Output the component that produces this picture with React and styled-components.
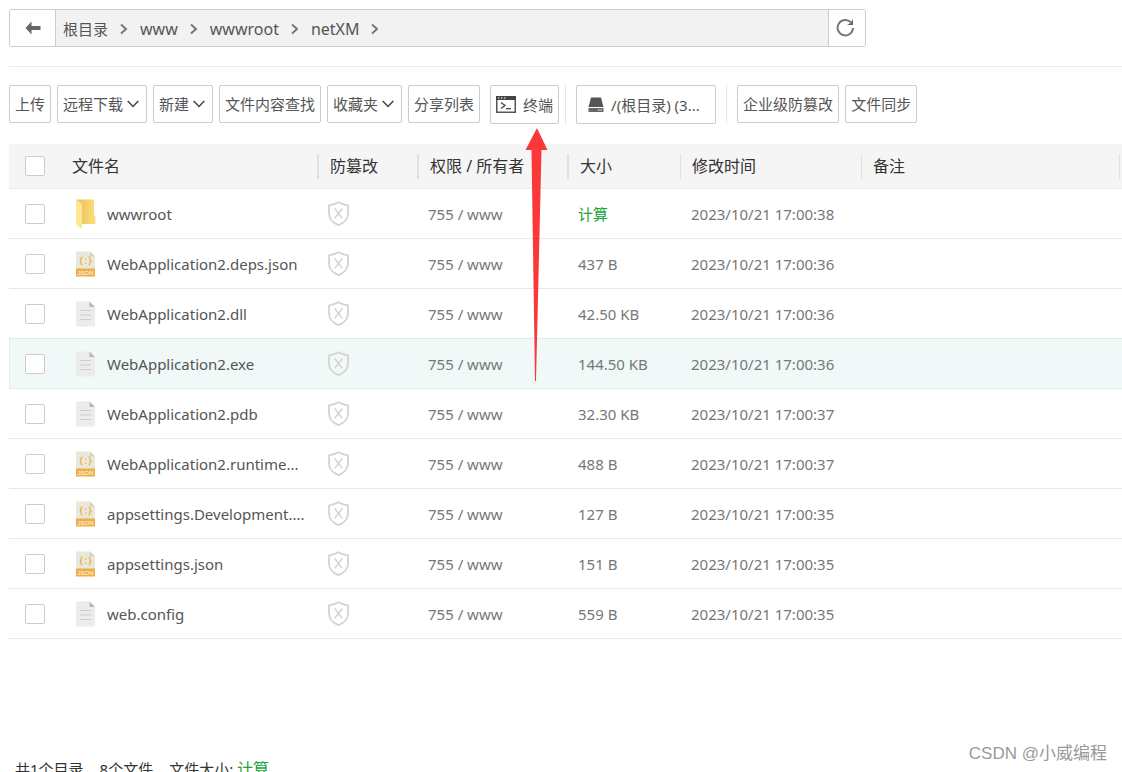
import React from "react";
import styled, { createGlobalStyle, css } from "styled-components";

const crumbs = ["www", "wwwroot", "netXM"];

const files = [
  { name: "wwwroot", type: "folder", size: null, time: "2023/10/21 17:00:38" },
  { name: "WebApplication2.deps.json", type: "json", size: "437 B", time: "2023/10/21 17:00:36" },
  { name: "WebApplication2.dll", type: "file", size: "42.50 KB", time: "2023/10/21 17:00:36" },
  { name: "WebApplication2.exe", type: "file", size: "144.50 KB", time: "2023/10/21 17:00:36", active: true },
  { name: "WebApplication2.pdb", type: "file", size: "32.30 KB", time: "2023/10/21 17:00:37" },
  { name: "WebApplication2.runtime...", type: "json", size: "488 B", time: "2023/10/21 17:00:37" },
  { name: "appsettings.Development....", type: "json", size: "127 B", time: "2023/10/21 17:00:35" },
  { name: "appsettings.json", type: "json", size: "151 B", time: "2023/10/21 17:00:35" },
  { name: "web.config", type: "file", size: "559 B", time: "2023/10/21 17:00:35" },
];

const BackIcon = () => (
  <svg width="16" height="14" viewBox="0 0 16 14">
    <path d="M6.500 0.500v4.500h9v4h-9v4.500L0.500 7z" fill="#666" />
  </svg>
);

const RefreshIcon = () => (
  <svg width="20" height="20" viewBox="0 0 20 20" fill="none">
    <path d="M14.800 4.300A7.700 7.700 0 1 0 17 10" stroke="#777" strokeWidth="2" />
    <path d="M17 1v6h-6l3.500-2z" fill="#666" />
  </svg>
);

const CrumbArrow = () => (
  <svg width="8" height="12" viewBox="0 0 8 12" fill="none">
    <path d="M1 1.500L6 6L1 10.500" stroke="#777" strokeWidth="2" />
  </svg>
);

const DownIcon = () => (
  <svg width="14" height="8" viewBox="0 0 14 8" fill="none">
    <path d="M0.700 1L6 6.500L11.300 1" stroke="#444" strokeWidth="1.500" />
  </svg>
);

const TerminalIcon = () => (
  <svg width="20" height="17" viewBox="0 0 20 17" fill="none">
    <rect x="0.750" y="0.750" width="18.500" height="15.500" stroke="#555" strokeWidth="1.500" />
    <rect x="0" y="0" width="20" height="4" fill="#444" />
    <path d="M2 2h1.500M5 2h1.500M8 2h1.500" stroke="#fff" strokeWidth="1" />
    <path d="M5 6.500L9 9.500L5 12.500" stroke="#444" strokeWidth="1.300" />
    <path d="M10 12.700h5" stroke="#444" strokeWidth="1.300" />
  </svg>
);

const DriveIcon = () => (
  <svg width="16" height="16" viewBox="0 0 16 16">
    <path d="M3 0.500h10l2.500 9.500h-15z" fill="#555" />
    <path d="M0.500 11h15v4h-15z" fill="#666" />
    <path d="M10 13h1.500M12.500 13h1.500" stroke="#fff" strokeWidth="1" />
  </svg>
);

const ShieldIcon = () => (
  <svg width="21" height="26" viewBox="0 0 21 26" fill="none">
    <path
      d="M10.500 1.200C7.700 2.900 4.600 3.800 1 4.400V12.500c0 5.500 4.500 9.800 9.500 11.700c5-1.900 9.500-6.200 9.500-11.700V4.400C16.400 3.800 13.300 2.900 10.500 1.200z"
      stroke="#d3d3d3"
      strokeWidth="1.800"
      strokeLinejoin="round"
    />
    <path d="M6.700 7.500l7.600 9.800M14.300 7.500l-7.600 9.800" stroke="#d0d0d0" strokeWidth="1.300" />
  </svg>
);

const FolderIcon = () => (
  <svg width="20" height="30" viewBox="0 0 20 30">
    <defs>
      <linearGradient id="folder" x1="0" x2="1">
        <stop offset="0.300" stopColor="#eec75f" />
        <stop offset="1" stopColor="#ffe07c" />
      </linearGradient>
    </defs>
    <path d="M0 0.500h18v15.500l1.500 1.500v7.500H5z" fill="url(#folder)" />
    <path d="M0 0.500l6 4.500v25L0 26z" fill="#ffe596" />
  </svg>
);

const JsonIcon = () => (
  <svg width="20" height="26" viewBox="0 0 20 26">
    <path d="M0 0.500h14l5 5V18H0z" fill="#e8e8dc" />
    <path d="M14 0.500l5 5h-5z" fill="#d0d0c2" />
    <path d="M0 17.500h19v8H0z" fill="#efad45" />
    <path
      d="M6.500 6q-1.500 0-1.500 1.500v1.200q0 1.300-1.500 1.300q1.500 0 1.500 1.300v1.200q0 1.500 1.500 1.500M12.500 6q1.500 0 1.500 1.500v1.200q0 1.300 1.500 1.300q-1.500 0-1.500 1.300v1.200q0 1.500-1.500 1.500"
      fill="none"
      stroke="#efad45"
      strokeWidth="1.200"
    />
    <path d="M9 7.500h1.200v1.200H9zM9 11.500h1.200v1.200H9z" fill="#efad45" />
    <text x="9.500" y="23.800" textAnchor="middle" fontFamily="Liberation Sans, sans-serif" fontSize="6" fill="#fff">
      JSON
    </text>
  </svg>
);

const FileIcon = () => (
  <svg width="20" height="26" viewBox="0 0 20 26">
    <path d="M1 0.500h12.500l5.500 5.500v18.500q0 1-1 1H1q-1 0-1-1v-23q0-1 1-1z" fill="#ececec" />
    <path d="M13.500 0.500l5.500 5.500h-5.500z" fill="#b8b8b8" />
    <path d="M4 9.500h11M4 14h11M4 18.500h11" stroke="#cdcdcd" strokeWidth="1" />
  </svg>
);

const icons = { folder: FolderIcon, json: JsonIcon, file: FileIcon };

const App = () => {
  return (
    <Page>
      <GlobalStyle />
      <PathBar>
        <BackButton aria-label="返回">
          <BackIcon />
        </BackButton>
        <Crumbs>
          <Crumb $root>
            <a href="#root">根目录</a>
            <CrumbArrow />
          </Crumb>
          {crumbs.map((crumb) => (
            <Crumb key={crumb}>
              <a href="#path">{crumb}</a>
              <CrumbArrow />
            </Crumb>
          ))}
        </Crumbs>
        <RefreshButton aria-label="刷新">
          <RefreshIcon />
        </RefreshButton>
      </PathBar>

      <Toolbar>
        <ToolButton>上传</ToolButton>
        <ToolButton>
          远程下载
          <DownIcon />
        </ToolButton>
        <ToolButton>
          新建
          <DownIcon />
        </ToolButton>
        <ToolButton>文件内容查找</ToolButton>
        <ToolButton>
          收藏夹
          <DownIcon />
        </ToolButton>
        <ToolButton>分享列表</ToolButton>
        <Group>
          <ToolButton $tall>
            <TerminalIcon />
            终端
          </ToolButton>
        </Group>
        <Group $divided>
          <ToolButton $tall $wide>
            <DriveIcon />
            /(根目录) (3...
          </ToolButton>
        </Group>
        <Group $divided $spaced>
          <ToolButton>企业级防篡改</ToolButton>
          <ToolButton>文件同步</ToolButton>
        </Group>
      </Toolbar>

      <Table>
        <colgroup>
          <Col $width="53px" />
          <Col $width="255px" />
          <Col $width="100px" />
          <Col $width="150px" />
          <Col $width="113px" />
          <Col $width="181px" />
          <col />
        </colgroup>
        <thead>
          <tr>
            <HeadCell>
              <Check type="checkbox" aria-label="全选" />
            </HeadCell>
            <HeadCell>
              <HeadLabel>文件名</HeadLabel>
            </HeadCell>
            <HeadCell>
              <HeadLabel $line="2px">防篡改</HeadLabel>
            </HeadCell>
            <HeadCell>
              <HeadLabel $line="2px">权限 / 所有者</HeadLabel>
            </HeadCell>
            <HeadCell>
              <HeadLabel $line="2px">大小</HeadLabel>
            </HeadCell>
            <HeadCell>
              <HeadLabel $line="1px">修改时间</HeadLabel>
            </HeadCell>
            <HeadCell>
              <HeadLabel $line="1px" $last>
                备注
              </HeadLabel>
            </HeadCell>
          </tr>
        </thead>
        <tbody>
          {files.map((file) => {
            const Icon = icons[file.type];
            return (
              <Row key={file.name} $active={file.active}>
                <Cell>
                  <Check type="checkbox" aria-label={file.name} />
                </Cell>
                <Cell>
                  <FileName>
                    <Icon />
                    <a href="#file">{file.name}</a>
                  </FileName>
                </Cell>
                <Cell>
                  <ShieldButton aria-label="防篡改">
                    <ShieldIcon />
                  </ShieldButton>
                </Cell>
                <Cell>755 / www</Cell>
                <Cell>{file.size || <Count href="#size">计算</Count>}</Cell>
                <Cell>{file.time}</Cell>
                <Cell />
              </Row>
            );
          })}
        </tbody>
      </Table>

      <Footer>
        <span>共1个目录</span>
        <span>8个文件</span>
        <span>
          文件大小: <Count href="#total" $large>计算</Count>
        </span>
      </Footer>

      <Pointer width="24" height="256" viewBox="0 0 24 256">
        <path d="M12 0L22.500 22H16.500L11 253H10L6.500 22H0.500z" fill="#fb3838" />
      </Pointer>
      <Watermark>CSDN @小威编程</Watermark>
    </Page>
  );
};

export default App;

const GlobalStyle = createGlobalStyle`
  * {
    box-sizing: border-box;
  }
  body {
    margin: 0;
    background: #fff;
    overflow: hidden;
  }
  body, button {
    font-family: "Noto Sans", "Noto Sans CJK SC", sans-serif;
  }
  a {
    color: inherit;
    text-decoration: none;
  }
  svg {
    flex-shrink: 0;
  }
`;

const Page = styled.div`
  position: relative;
  height: 100vh;
  overflow: hidden;
  padding: 9px 0 0 9px;
  font-size: 15px;
  color: #555;
`;

const PathBar = styled.nav`
  display: flex;
  max-width: 857px;
  height: 38px;
  border: 1px solid #ccc;
  border-radius: 2px;
`;

const BackButton = styled.button`
  display: flex;
  justify-content: center;
  align-items: center;
  width: 46px;
  padding: 0;
  background: #fff;
  border: none;
  border-right: 1px solid #ccc;
`;

const RefreshButton = styled(BackButton)`
  width: 37px;
  padding-right: 2px;
  border-right: none;
  border-left: 1px solid #ccc;
`;

const Crumbs = styled.div`
  display: flex;
  align-items: center;
  flex: 1;
  gap: 12px;
  padding: 2px 0 0 7px;
  background: #f2f2f2;
`;

const Crumb = styled.span`
  display: flex;
  align-items: center;
  gap: 12px;
  font-size: ${(props) => (props.$root ? 15 : 16)}px;
  line-height: 24px;
`;

const Toolbar = styled.div`
  display: flex;
  align-items: flex-start;
  gap: 6px;
  margin-top: 19px;
  padding-top: 18px;
  border-top: 1px solid #ebebeb;
`;

const ToolButton = styled.button`
  display: flex;
  align-items: center;
  gap: ${(props) => (props.$tall ? 7 : 4)}px;
  height: ${(props) => (props.$tall ? 39 : 38)}px;
  min-width: ${(props) => (props.$wide ? "140px" : "auto")};
  padding: 0 ${(props) => (props.$wide ? 11 : 5)}px;
  background: #fff;
  border: 1px solid #ccc;
  border-radius: 2px;
  font-size: 15px;
  line-height: 20px;
  white-space: nowrap;
  color: #555;
`;

const Group = styled.div`
  display: flex;
  gap: 6px;
  margin-left: 4px;
  ${(props) =>
    props.$divided &&
    css`
      margin-left: ${props.$spaced ? 4 : 0}px;
      padding-left: 10px;
      border-left: 1px solid #e6e6e6;
    `}
`;

const Table = styled.table`
  width: 100%;
  margin-top: 20px;
  table-layout: fixed;
  border-collapse: separate;
  border-spacing: 0;
`;

const Col = styled.col`
  width: ${(props) => props.$width};
`;

const HeadCell = styled.th`
  height: 45px;
  padding: 0;
  background: #f5f5f5;
  border-bottom: 1px solid #e8e8e8;
  text-align: left;
  font-size: 16px;
  font-weight: 400;
  color: #333;
`;

const HeadLabel = styled.div`
  height: 25px;
  margin-right: ${(props) => (props.$last ? 2 : 0)}px;
  padding-left: ${(props) => (props.$line ? 11 : 10)}px;
  border-left: ${(props) => props.$line || 0} solid #e0e0e0;
  border-right: ${(props) => (props.$last ? "1px" : 0)} solid #e0e0e0;
  line-height: 25px;
  white-space: nowrap;
`;

const Cell = styled.td`
  height: 50px;
  padding: 0 0 0 11px;
  border-bottom: 1px solid #e8e8e8;
  line-height: 24px;
  white-space: nowrap;
  color: #777;
`;

const Row = styled.tr`
  ${(props) =>
    props.$active &&
    css`
      background: #f0f9f7;
      ${Cell} {
        border-color: #dceee9;
      }
      ${Cell}:first-child {
        box-shadow: inset 1px 0 #dceee9;
      }
    `}
  ${Cell}:first-child {
    padding-left: 0;
  }
`;

const Check = styled.input`
  appearance: none;
  display: block;
  width: 20px;
  height: 20px;
  margin: 0 0 0 16px;
  background: #fff;
  border: 1px solid #ccc;
  border-radius: 2px;
`;

const FileName = styled.div`
  display: flex;
  align-items: center;
  gap: 11px;
  padding-left: 3px;
  color: #555;
`;

const ShieldButton = styled.button`
  display: block;
  height: 26px;
  padding: 0;
  background: none;
  border: none;
`;

const Count = styled.a`
  font-size: ${(props) => (props.$large ? 16 : 15)}px;
  color: #20a53a;
`;

const Footer = styled.footer`
  display: flex;
  gap: 16px;
  margin-top: 120px;
  padding-left: 6px;
  line-height: 20px;
  color: #333;
`;

const Pointer = styled.svg`
  position: absolute;
  top: 128px;
  left: 525px;
  pointer-events: none;
`;

const Watermark = styled.div`
  position: absolute;
  right: 15px;
  bottom: 6px;
  font-family: "Liberation Sans", "Noto Sans CJK SC", sans-serif;
  font-size: 17px;
  line-height: 24px;
  color: #999;
`;
